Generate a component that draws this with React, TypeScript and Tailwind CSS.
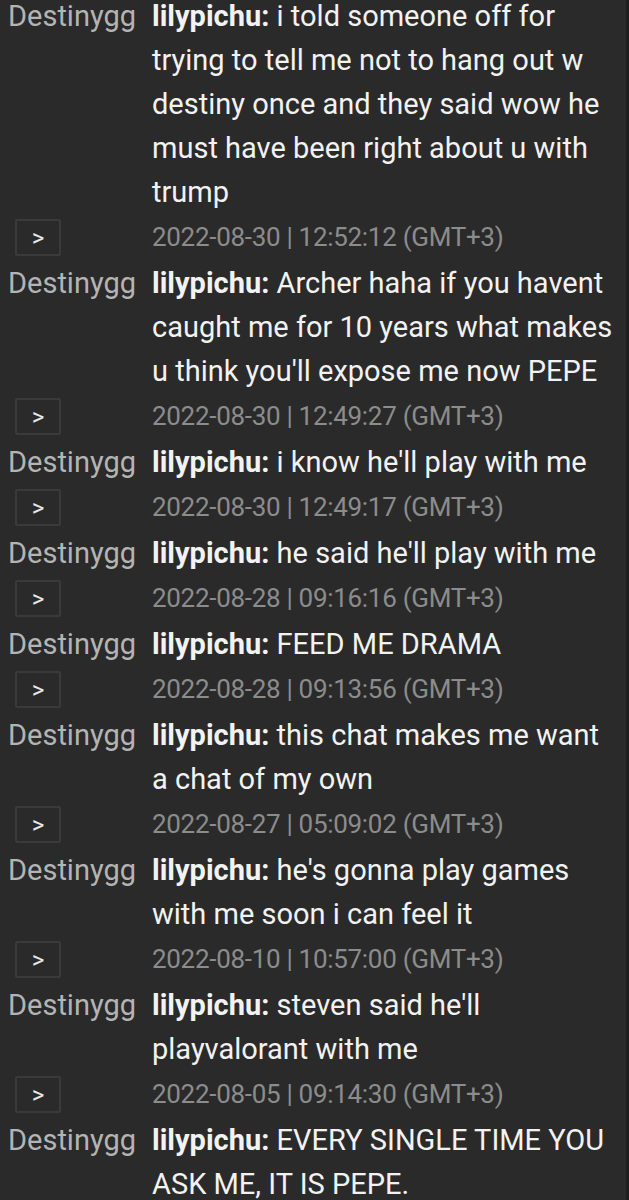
const entries = [
  {
    ts: "",
    lines: [
      "i told someone off for",
      "trying to tell me not to hang out w",
      "destiny once and they said wow he",
      "must have been right about u with",
      "trump",
    ],
  },
  {
    ts: "2022-08-30 | 12:52:12 (GMT+3)",
    lines: ["Archer haha if you havent", "caught me for 10 years what makes", "u think you'll expose me now PEPE"],
  },
  { ts: "2022-08-30 | 12:49:27 (GMT+3)", lines: ["i know he'll play with me"] },
  { ts: "2022-08-30 | 12:49:17 (GMT+3)", lines: ["he said he'll play with me"] },
  { ts: "2022-08-28 | 09:16:16 (GMT+3)", lines: ["FEED ME DRAMA"] },
  { ts: "2022-08-28 | 09:13:56 (GMT+3)", lines: ["this chat makes me want", "a chat of my own"] },
  { ts: "2022-08-27 | 05:09:02 (GMT+3)", lines: ["he's gonna play games", "with me soon i can feel it"] },
  { ts: "2022-08-10 | 10:57:00 (GMT+3)", lines: ["steven said he'll", "playvalorant with me"] },
  { ts: "2022-08-05 | 09:14:30 (GMT+3)", lines: ["EVERY SINGLE TIME YOU", "ASK ME, IT IS PEPE."] },
];

const TimeRow = ({ ts }: { ts: string }) => (
  <div className="flex h-[47px] items-center">
    <div className="w-[152px] pl-[15px]">
      <button className="flex h-[37px] w-[46px] items-center justify-center rounded-[2px] border-2 border-[#3a3a3a] text-[24px] leading-none text-[#e8e8e8]">
        &gt;
      </button>
    </div>
    <span className="whitespace-nowrap text-[26px] tracking-[-0.3px] text-[#8c8c8c]">{ts}</span>
  </div>
);

const Message = ({ lines }: { lines: string[] }) => (
  <div className="flex text-[29px] leading-[44px]">
    <div className="w-[152px] shrink-0 pl-[8px] text-[#b4b4b4]">Destinygg</div>
    <div className="flex flex-col text-[#f2f2f2]">
      {lines.map((l, i) => (
        <div key={i} className="whitespace-nowrap">
          {i === 0 && <span className="font-bold">lilypichu: </span>}
          {l}
        </div>
      ))}
    </div>
  </div>
);

export default function App() {
  return (
    <div className="h-[1200px] w-[629px] overflow-hidden bg-[#1e1e1e] font-['Roboto',sans-serif]">
      <div className="mr-[3px] h-full overflow-hidden bg-[#2a2a2a]">
        <div className="-mt-[6px] flex flex-col">
          {entries.map((e, i) => (
            <div key={i}>
              {i > 0 && <TimeRow ts={e.ts} />}
              <Message lines={e.lines} />
            </div>
          ))}
        </div>
      </div>
    </div>
  );
}
